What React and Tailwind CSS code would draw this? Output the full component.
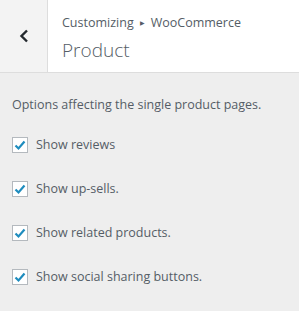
export default function App() {
  const options = [
    "Show reviews",
    "Show up-sells.",
    "Show related products.",
    "Show social sharing buttons.",
  ];

  return (
    <div
      className="w-[299px] h-[311px] bg-[#eeeeee] text-[#555d66] overflow-hidden"
      style={{ fontFamily: '"Open Sans", "Noto Sans", sans-serif' }}
    >
      {/* Header */}
      <div className="flex h-[73px] bg-white border-b border-[#dddddd]">
        <button className="w-[48px] shrink-0 flex items-center justify-center bg-[#f3f3f3] border-r border-[#dddddd] text-[#23282d]">
          <svg width="10" height="14" viewBox="0 0 10 14" fill="none">
            <path d="M8 1.5 L2.5 7 L8 12.5" stroke="currentColor" strokeWidth="2.4" />
          </svg>
        </button>
        <div className="flex flex-col pl-[14px] pt-[14px]">
          <div className="text-[12.5px] leading-[18px] flex items-center gap-[6px]">
            <span>Customizing</span>
            <span className="text-[6px]">▶</span>
            <span>WooCommerce</span>
          </div>
          <div className="text-[19px] font-light leading-[26px] mt-[5px]">Product</div>
        </div>
      </div>

      {/* Body */}
      <div className="px-[12px] pt-[22px]">
        <p className="text-[12.5px] leading-[20px] mb-[22px]">
          Options affecting the single product pages.
        </p>
        <div className="flex flex-col gap-[28px]">
          {options.map((o) => (
            <label key={o} className="flex items-center gap-[8px] text-[12.5px] leading-[16px]">
              <span className="w-[16px] h-[16px] bg-white border border-[#b4b9be] flex items-center justify-center">
                <svg width="12" height="11" viewBox="0 0 12 11" fill="none">
                  <path d="M1.5 5.5 L4.5 8.5 L10.5 1.5" stroke="#1e8cbe" strokeWidth="2.2" />
                </svg>
              </span>
              <span>{o}</span>
            </label>
          ))}
        </div>
      </div>
    </div>
  );
}
